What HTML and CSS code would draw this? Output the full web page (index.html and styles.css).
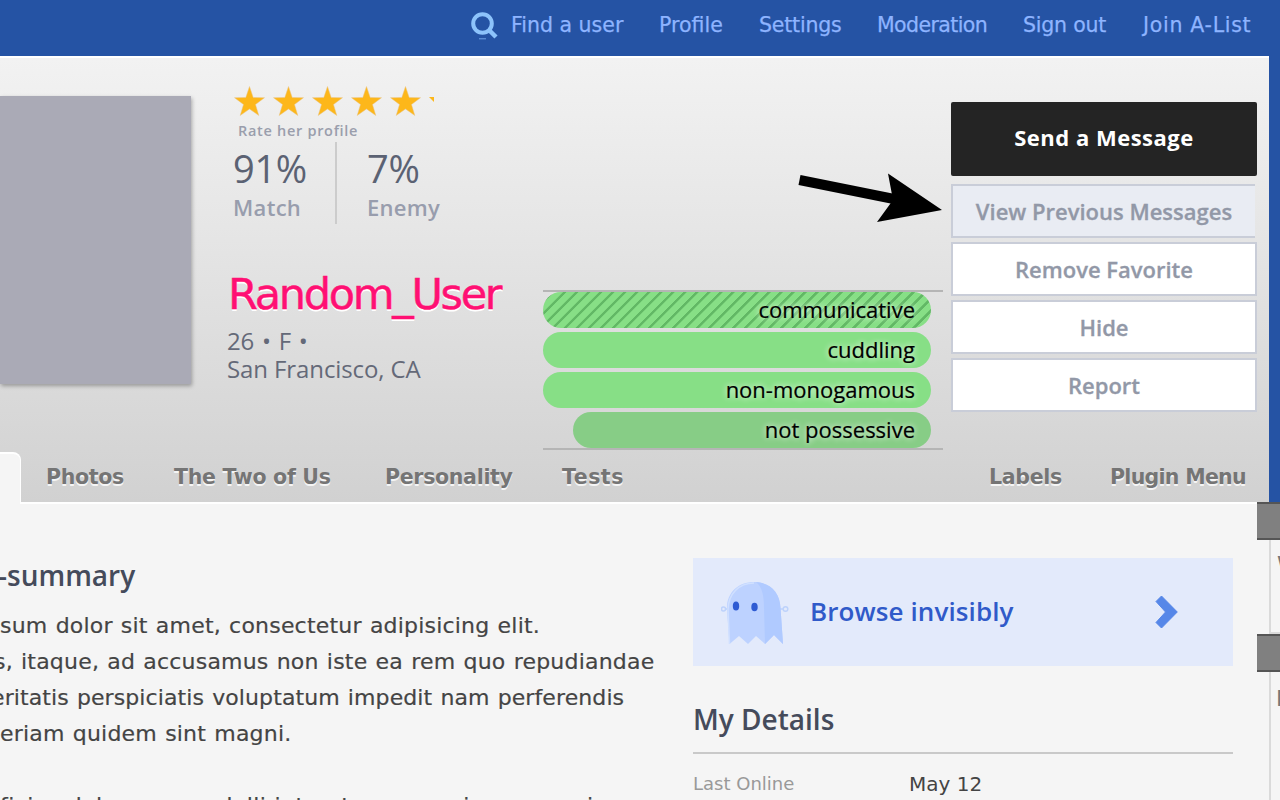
FILE: index.html
```html
<!DOCTYPE html>
<html lang="en">
<head>
<meta charset="utf-8">
<title>Random_User</title>
<link rel="stylesheet" href="styles.css">
</head>
<body>
<nav class="topbar">
  <svg class="search" width="28" height="30" viewBox="0 0 28 30"><circle cx="11.500" cy="13.500" r="9.300" fill="none" stroke="#8dc3fb" stroke-width="4"/><path d="M17.500 19.500 25 27" stroke="#8dc3fb" stroke-width="4.500"/><path d="M8 28.800h7" stroke="#6fa3e6" stroke-width="1"/></svg>
  <a class="n1">Find a user</a><a class="n2">Profile</a><a class="n3">Settings</a><a class="n4">Moderation</a><a class="n5">Sign out</a><a class="n6">Join A-List</a>
</nav>
<header class="profile">
  <div class="hero">
    <div class="photo"></div>
    <div class="info">
      <svg class="stars" width="204" height="32" viewBox="0 0 204 32">
        <defs><path id="star" d="M16 0 19.700 11 31 11.200 22 18 25.300 29 16 22.400 6.700 29 10 18 1 11.200 12.300 11z" fill="#fdb71a" stroke="#e9c489" stroke-width=".5"/></defs>
        <use href="#star" x="0.500" y="1.500"/><use href="#star" x="39.500" y="1.500"/><use href="#star" x="78.500" y="1.500"/><use href="#star" x="117.500" y="1.500"/><use href="#star" x="156.500" y="1.500"/>
        <path d="M196 12h5v5z" fill="#fdb71a"/>
      </svg>
      <div class="rate">Rate her profile</div>
      <div class="scores">
        <div class="score match"><b>91%</b><span>Match</span></div>
        <div class="score enemy"><b>7%</b><span>Enemy</span></div>
      </div>
      <h1>Random_User</h1>
      <div class="about"><div class="age">26 • F •</div><div>San Francisco, CA</div></div>
    </div>
    <div class="traits">
      <div class="trait striped">communicative</div>
      <div class="trait">cuddling</div>
      <div class="trait">non-monogamous</div>
      <div class="trait short">not possessive</div>
    </div>
    <div class="actions">
      <a class="send">Send a Message</a>
      <a class="btn previous">View Previous Messages</a>
      <a class="btn fav">Remove Favorite</a>
      <a class="btn">Hide</a>
      <a class="btn">Report</a>
    </div>
  </div>
  <div class="tabs">
    <span class="active"></span>
    <a class="t1">Photos</a><a class="t2">The Two of Us</a><a class="t3">Personality</a><a class="t4">Tests</a><a class="t5">Labels</a><a class="t6">Plugin Menu</a>
  </div>
</header>
<main class="content">
  <section class="essay">
    <h2>-summary</h2>
    <p><span class="l1">sum dolor sit amet, consectetur adipisicing elit.</span>
    <span class="l2">s, itaque, ad accusamus non iste ea rem quo repudiandae</span>
    <span class="l3">eritatis perspiciatis voluptatum impedit nam perferendis</span>
    <span class="l4">eriam quidem sint magni.</span></p>
    <p class="second">ficias dolorum eos dolli interetum quaesi maxumeri</p>
  </section>
  <section class="side">
    <div class="promo">
      <svg class="ghost" width="68" height="66" viewBox="0 0 68 66">
        <g fill="none" stroke="#bdd2fb" stroke-width="1.500"><path d="M8 28H4M58 28h5"/><circle cx="2.500" cy="28" r="2"/><circle cx="64.500" cy="28" r="2.300"/></g>
        <path d="M6 29C5 12 17 1 33 1s26 11 26.500 26L62 63l-9-9-9 9-9-8-8 8-9-8-9.500 8z" fill="#bdd2ff"/>
        <path d="M35 1c15 1 24 11 24.500 26L62 63l-9-9-9 9-1-36C43 14 41 6 35 1z" fill="#b0caff"/>
        <path d="M8.500 63 7 29C7 13 18 2 33 2" fill="none" stroke="#d0e0ff" stroke-width="1.500"/>
        <ellipse cx="15" cy="25" rx="3.200" ry="4.500" fill="#2e5bd3"/><ellipse cx="33.500" cy="26" rx="3.200" ry="4.300" fill="#2e5bd3"/>
      </svg>
      <span class="promotext">Browse invisibly</span>
      <svg class="chevron" width="24" height="34" viewBox="0 0 24 34"><path d="M6.500 1 22.300 17 6.500 33 1 27.500 10.500 17 1 6.500z" fill="#5687e8" stroke="#5687e8" stroke-linejoin="round"/></svg>
    </div>
    <h2>My Details</h2>
    <div class="details"><span>Last Online</span><b>May 12</b></div>
  </section>
  <aside class="rail">
    <div class="handle"></div>
    <div class="panel first"><span>W</span></div>
    <div class="handle"></div>
    <div class="panel last"><span>M</span></div>
  </aside>
</main>
<svg class="arrow" width="146" height="54" viewBox="0 0 146 54"><path d="M1.500 7 96 26" stroke="#000" stroke-width="10"/><path d="M90 .5 144 37 79 49 95 27z"/></svg>
</body>
</html>
```
FILE: styles.css
```css
* { box-sizing: border-box; }
body { margin: 0; width: 1280px; height: 800px; overflow: hidden; position: relative; background: #2553a4; font-family: "Open Sans", "Noto Sans", sans-serif; }
.topbar { height: 56px; display: flex; padding-left: 471px; font: 20.500px/24px "DejaVu Sans", sans-serif; color: #8eb4ff; white-space: nowrap; -webkit-text-stroke: .25px; }
.topbar a { margin-top: 13px; flex: none; }
.search { margin: 10px 12px 0 0; flex: none; }
.n1 { width: 148px; }
.n2 { width: 100px; }
.n3 { width: 118px; }
.n4 { width: 146px; letter-spacing: -.6px; }
.n5 { width: 120px; }
.n3, .n5 { letter-spacing: -.2px; }
.n6 { letter-spacing: .7px; }

.profile { width: 1269px; height: 448px; border-top: 2px solid #fff; border-bottom: 2px solid #fff; background: linear-gradient(#f2f2f2, #e6e6e6 38%, #d1d1d1); }
.hero { height: 394px; display: flex; }
.photo { width: 191px; height: 288px; margin-top: 38px; background: #aaaab6; box-shadow: 1px 2px 4px rgba(0, 0, 0, .3); flex: none; }
.info { width: 352px; padding: 27px 0 0 36px; flex: none; white-space: nowrap; }
.stars { display: block; margin-left: 6px; }
.rate { margin: 5px 0 0 11px; font-size: 14.500px; font-weight: 600; line-height: 18px; letter-spacing: .7px; color: #9a9eac; }
.scores { display: flex; height: 82px; margin-top: 2px; }
.score { display: flex; flex-direction: column; padding-left: 6px; }
.score.match { width: 110px; border-right: 2px solid #ccc; }
.score.enemy { padding-left: 30px; }
.score b { font-weight: 400; font-size: 38px; line-height: 52px; letter-spacing: -.3px; color: #5b6273; }
.score span { font-weight: 600; font-size: 22px; line-height: 26px; letter-spacing: .3px; color: #989dad; }
h1 { margin: 43px 0 0 1px; font: 43px/54px "DejaVu Sans", sans-serif; letter-spacing: -2.300px; color: #ff1073; text-shadow: 0 2px 0 #fff; -webkit-text-stroke: .5px #ff1073; }
.about { margin: 6px 0 0; font-size: 24px; line-height: 28px; letter-spacing: -.1px; color: #646978; }
.age { word-spacing: 1.600px; }
.traits { width: 400px; height: 160px; margin-top: 232px; border-top: 2px solid #b5b5b5; border-bottom: 2px solid #b5b5b5; display: flex; flex-direction: column; gap: 4px; flex: none; }
.trait { width: 388px; height: 36px; border-radius: 18px; padding-right: 16px; background: #87df86; text-align: right; font-size: 22px; line-height: 34px; color: #000; text-shadow: 0 0 6px #fff; -webkit-text-stroke: .2px; flex: none; }
.trait.striped { background: repeating-linear-gradient(135deg, #87df86 0, #87df86 5.500px, #62b865 6px, #62b865 8px, #87df86 8.500px); }
.trait.short { width: 358px; margin-left: 30px; background: #87cd86; }
.actions { width: 306px; margin: 44px 0 0 8px; display: flex; flex-direction: column; gap: 4px; flex: none; }
.actions a { text-align: center; white-space: nowrap; }
.send { height: 74px; margin-bottom: 4px; border-radius: 2px; background: #242424; color: #fff; font-weight: 700; font-size: 22px; line-height: 70px; letter-spacing: .5px; }
.btn { height: 54px; border: 2px solid #c9cdd8; background: #fff; color: #9298a7; font-weight: 600; font-size: 22px; line-height: 50px; -webkit-text-stroke: .3px; }
.btn.previous { width: 304px; border-right: 0; background: #e9ecf3; }

.tabs { height: 50px; display: flex; font: bold 20.500px/50px "DejaVu Sans", sans-serif; letter-spacing: -.3px; color: #757575; text-shadow: 0 2px 0 #f5f5f5; white-space: nowrap; }
.tabs a { flex: none; }
.active { width: 21px; height: 52px; margin-right: 25px; border-top: 2px solid #fff; border-right: 1px solid #fff; border-top-right-radius: 8px; background: #f5f5f5; flex: none; }
.t1 { width: 128px; }
.t2 { width: 211px; }
.t3 { width: 177px; }
.t4 { width: 427px; letter-spacing: .5px; }
.t5 { width: 121px; }
.t6 { letter-spacing: -.7px; }

.content { height: 296px; display: flex; background: #f5f5f5; }
.essay { width: 693px; padding-top: 49px; flex: none; overflow: hidden; white-space: nowrap; }
h2 { margin: 0; font-weight: 600; font-size: 28px; line-height: 44px; color: #454b5b; }
.essay h2 { margin-left: -2px; }
.essay p { margin: 11px 0 0; font: 22px/36px "DejaVu Sans", sans-serif; letter-spacing: .2px; word-spacing: 1px; color: #444; -webkit-text-stroke: .2px; }
.essay p span { display: block; }
.essay p.second { margin-top: 36px; letter-spacing: .4px; }
.essay .l2 { margin-left: -6px; }
.essay .l3 { margin-left: -9px; letter-spacing: .1px; }
.side { width: 540px; padding-top: 54px; flex: none; }
.promo { height: 108px; padding: 4px 0 0 28px; display: flex; align-items: center; background: #e3eafb; }
.promotext { margin: -6px 0 0 21px; width: 345px; font-size: 26px; font-weight: 600; letter-spacing: .1px; color: #305ac9; white-space: nowrap; }
.chevron { margin-top: -5px; }
.side h2 { margin-top: 31px; height: 57px; border-bottom: 2px solid #c9c9c9; }
.details { display: flex; padding-top: 17px; font: 18px/26px "DejaVu Sans", sans-serif; color: #999; }
.details span { width: 216px; }
.details b { font-weight: 400; font-size: 20px; color: #444; }
.rail { width: 23px; margin: -2px 0 0 24px; flex: none; overflow: hidden; }
.handle { height: 38px; background: #808080; border-top: 2px solid #555; border-bottom: 2px solid #555; }
.panel { margin-left: 12px; border-left: 2px solid #dadada; font: 22px/26px "DejaVu Sans", sans-serif; color: #777; overflow: hidden; }
.panel.first { height: 94px; border-bottom: 2px solid #dadada; padding: 12px 0 0 6px; }
.panel.last { height: 130px; padding: 14px 0 0 5px; }
.arrow { position: absolute; left: 798px; top: 173px; }
```
